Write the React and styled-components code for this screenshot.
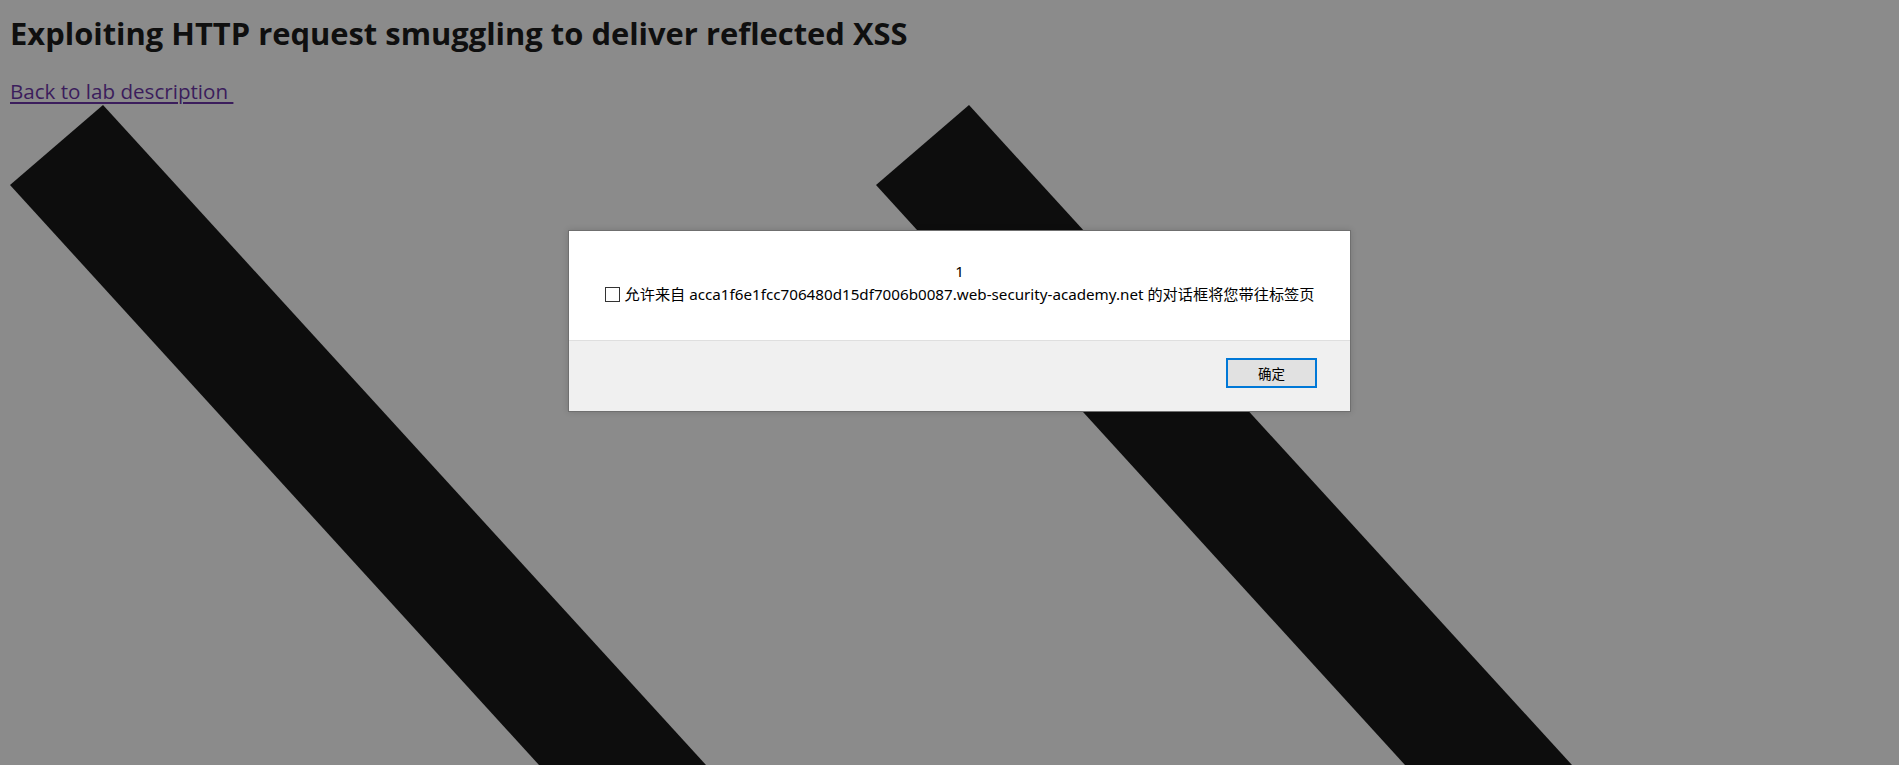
import React from 'react'
import styled, { createGlobalStyle } from 'styled-components'

const GlobalStyle = createGlobalStyle`
    html, body {
        margin: 0;
        padding: 0;
        background: #8b8b8b;
    }
`

const Page = styled.div`
    position: relative;
    width: 100%;
    height: 765px;
    overflow: hidden;
    background: #8b8b8b;
    font-family: "Open Sans", "Noto Sans", sans-serif;
`

const Backdrop = styled.svg`
    position: absolute;
    left: 0;
    top: 0;
    width: 1899px;
    height: 765px;
    z-index: 0;
`

const Header = styled.header`
    position: relative;
    z-index: 1;
    padding: 12px 10px 0 10px;
    display: flex;
    flex-direction: column;
    align-items: flex-start;
`

const Title = styled.h2`
    margin: 0;
    font-size: 30.9px;
    line-height: 42px;
    font-weight: 700;
    color: #0f0f0f;
`

const BackLink = styled.a`
    margin-top: 25px;
    font-size: 20.6px;
    line-height: 24px;
    color: #3b1d5c;
    text-decoration: underline;
    text-underline-offset: 3px;
    white-space: pre;
`

const Dialog = styled.div`
    position: absolute;
    z-index: 2;
    left: 568px;
    top: 230px;
    width: 781px;
    height: 180px;
    border: 1px solid #6f6f6f;
    display: flex;
    flex-direction: column;
    font-family: "Noto Sans", "Noto Sans CJK SC", sans-serif;
    font-size: 15.2px;
    color: #000;
    box-shadow: 0 0 6px rgba(0, 0, 0, 0.15);
`

const Body = styled.div`
    height: 110px;
    background: #ffffff;
    border-bottom: 1px solid #dfdfdf;
    display: flex;
    flex-direction: column;
    align-items: center;
    padding-top: 30px;
    box-sizing: border-box;
    gap: 3px;
`

const Message = styled.div`
    line-height: 20px;
`

const CheckRow = styled.label`
    display: flex;
    align-items: center;
    gap: 5px;
    line-height: 20px;
    white-space: nowrap;
`

const Box = styled.span`
    display: inline-block;
    width: 13px;
    height: 13px;
    border: 1px solid #333333;
    background: #ffffff;
`

const Footer = styled.div`
    flex: 1;
    background: #f0f0f0;
    display: flex;
    justify-content: flex-end;
    align-items: flex-start;
    padding: 17px 33px 0 0;
`

const OkButton = styled.button`
    width: 91px;
    height: 30px;
    background: #e1e1e1;
    border: 2px solid #0078d7;
    font-family: "Noto Sans CJK SC", sans-serif;
    font-size: 13.5px;
    color: #000;
    padding: 0;
`

const stripes = [0, 866]

export default function App() {
    return (
        <>
            <GlobalStyle />
            <Page>
                <Backdrop viewBox="0 0 1899 765">
                    {stripes.map((dx) => (
                        <polygon
                            key={dx}
                            fill="#0d0d0d"
                            points={`${10 + dx},185 ${103 + dx},105 ${706 + dx},765 ${539 + dx},765`}
                        />
                    ))}
                </Backdrop>
                <Header>
                    <Title>Exploiting HTTP request smuggling to deliver reflected XSS</Title>
                    <BackLink href="#">Back to lab description </BackLink>
                </Header>
                <Dialog>
                    <Body>
                        <Message>1</Message>
                        <CheckRow>
                            <Box />
                            允许来自 acca1f6e1fcc706480d15df7006b0087.web-security-academy.net 的对话框将您带往标签页
                        </CheckRow>
                    </Body>
                    <Footer>
                        <OkButton>确定</OkButton>
                    </Footer>
                </Dialog>
            </Page>
        </>
    )
}
